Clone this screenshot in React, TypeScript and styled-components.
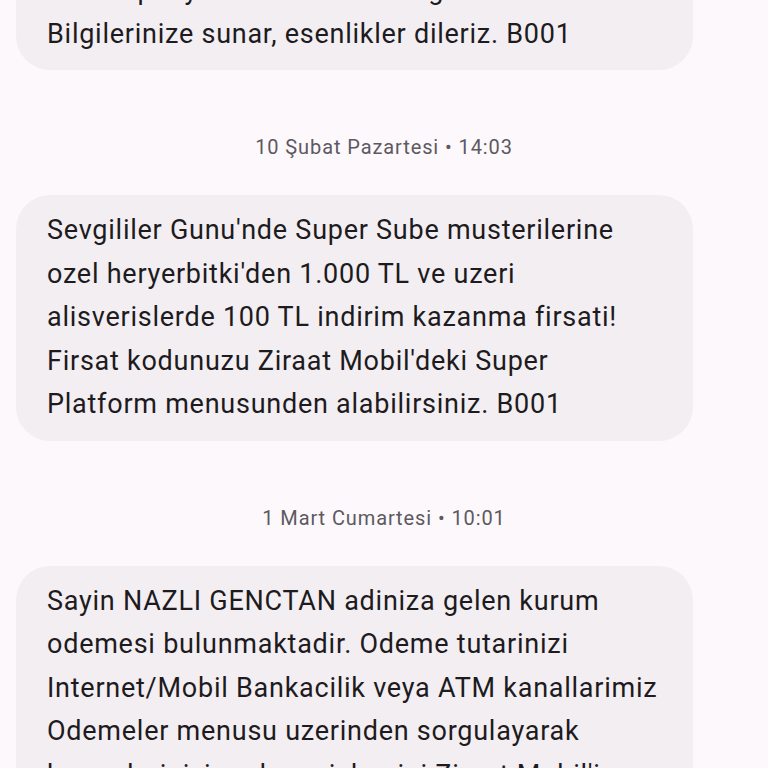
import styled, { createGlobalStyle } from "styled-components";

const GlobalStyle = createGlobalStyle`
  html, body {
    margin: 0;
    padding: 0;
    background: #fcf8fc;
  }
  body {
    font-family: Roboto, "Noto Sans", sans-serif;
  }
`;

const Screen = styled.div`
  width: 768px;
  height: 768px;
  overflow: hidden;
  background: #fcf8fc;
`;

const Thread = styled.div`
  display: flex;
  flex-direction: column;
  margin-top: -45px;
`;

const Bubble = styled.div`
  align-self: flex-start;
  width: 677px;
  box-sizing: border-box;
  margin-left: 16px;
  padding: 14px 20px 14px 31px;
  border-radius: 34px;
  background: #f3eef2;
  color: #1d1b1e;
  font-size: 27px;
  line-height: 43.5px;
  letter-spacing: 0.75px;
`;

const Line = styled.span`
  display: block;
  white-space: nowrap;
`;

const Stamp = styled.div`
  margin: 65px 0 36px;
  text-align: center;
  color: #5d595f;
  font-size: 20px;
  line-height: 24px;
  letter-spacing: 0.9px;
`;

type Message = {
  stamp?: string;
  lines: string[];
};

const messages: Message[] = [
  {
    lines: [
      "ve kampanyalarimiz hakkinda guncel",
      "Bilgilerinize sunar, esenlikler dileriz. B001",
    ],
  },
  {
    stamp: "10 Şubat Pazartesi • 14:03",
    lines: [
      "Sevgililer Gunu'nde Super Sube musterilerine",
      "ozel heryerbitki'den 1.000 TL ve uzeri",
      "alisverislerde 100 TL indirim kazanma firsati!",
      "Firsat kodunuzu Ziraat Mobil'deki Super",
      "Platform menusunden alabilirsiniz. B001",
    ],
  },
  {
    stamp: "1 Mart Cumartesi • 10:01",
    lines: [
      "Sayin NAZLI GENCTAN adiniza gelen kurum",
      "odemesi bulunmaktadir. Odeme tutarinizi",
      "Internet/Mobil Bankacilik veya ATM kanallarimiz",
      "Odemeler menusu uzerinden sorgulayarak",
      "kurumlarinizin odeme islemini Ziraat Mobil'i",
    ],
  },
];

export default function App() {
  return (
    <>
      <GlobalStyle />
      <Screen>
        <Thread>
          {messages.map((m, i) => (
            <div key={i} style={{ display: "contents" }}>
              {m.stamp && <Stamp>{m.stamp}</Stamp>}
              <Bubble>
                {m.lines.map((l, j) => (
                  <Line key={j}>{l}</Line>
                ))}
              </Bubble>
            </div>
          ))}
        </Thread>
      </Screen>
    </>
  );
}
